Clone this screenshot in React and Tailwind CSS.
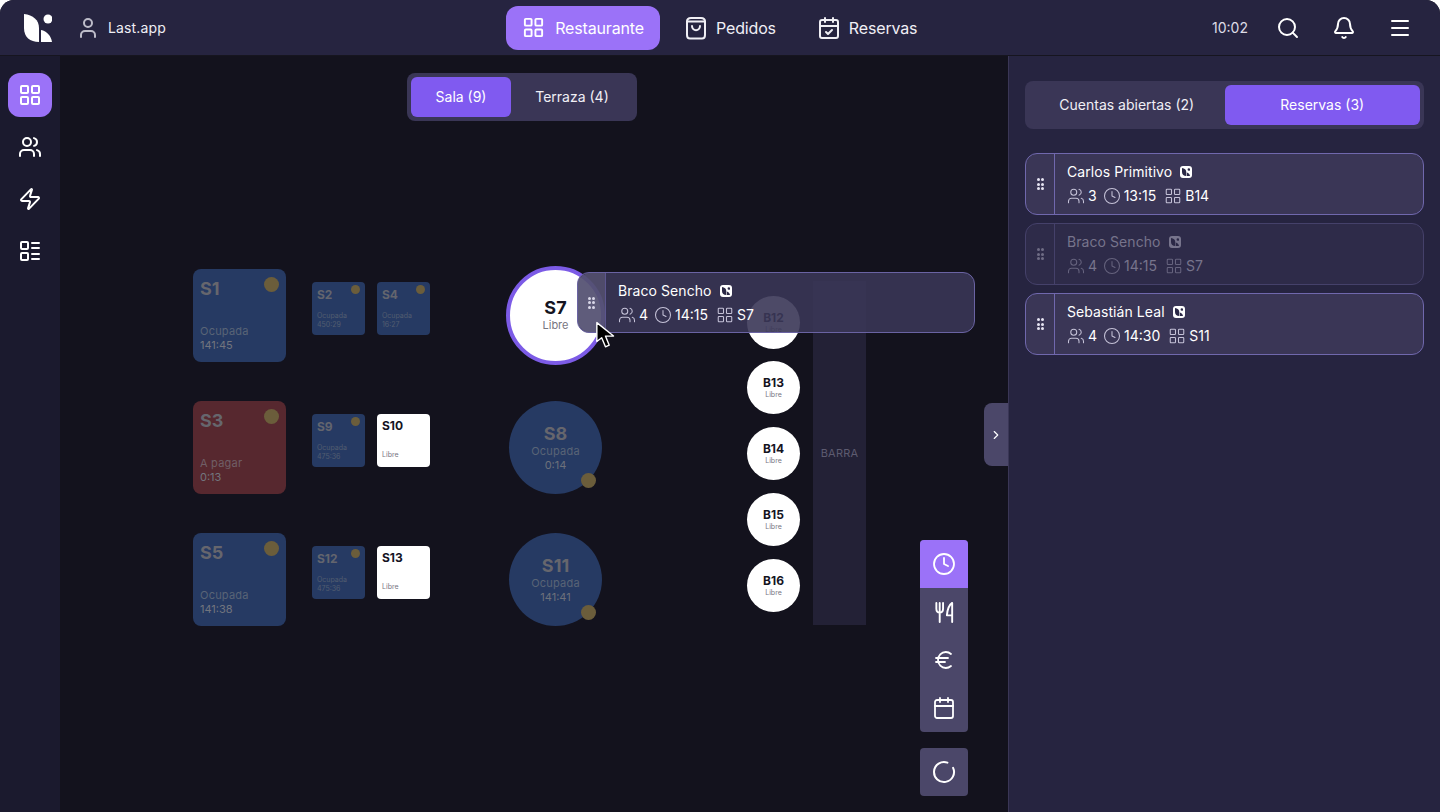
import { Bell, Calendar, CalendarCheck, ChevronRight, Clock, Euro, LayoutGrid, Menu, Search, User, Users, Zap } from 'lucide-react';

const font = { fontFamily: 'Inter, "Noto Sans", sans-serif' };

const Logo = ({ className }) => (
  <svg viewBox="0 0 28 28" className={className} fill="currentColor">
    <path d="M0 0 C9 1 15 6 15 14 V28 C6 28 0 23 0 14 Z" />
    <circle cx="24" cy="5" r="4.500" />
    <path d="M17 16 C23 17 27 22 28 28 H17 Z" />
  </svg>
);

const BagIcon = ({ className }) => (
  <svg viewBox="0 0 24 24" className={className} fill="none" stroke="currentColor" strokeWidth="2" strokeLinecap="round" strokeLinejoin="round">
    <path d="M3 5.500 C3 3 5 2 7 2 H17 C19 2 21 3 21 5.500 V19 C21 21 19.700 22.500 18 22.500 H6 C4.300 22.500 3 21 3 19 Z" />
    <path d="M3 5.500 H21" />
    <path d="M8 10 C8 15.500 16 15.500 16 10" />
  </svg>
);

const ListIcon = ({ className }) => (
  <svg viewBox="0 0 24 24" className={className} fill="none" stroke="currentColor" strokeWidth="2" strokeLinecap="round" strokeLinejoin="round">
    <rect x="3" y="3" width="7" height="7" rx="1" />
    <rect x="3" y="14" width="7" height="7" rx="1" />
    <path d="M14 4h7M14 9h7M14 15h7M14 20h7" />
  </svg>
);

const CutleryIcon = ({ className }) => (
  <svg viewBox="0 0 24 24" className={className} fill="none" stroke="currentColor" strokeWidth="2" strokeLinecap="round" strokeLinejoin="round">
    <path d="M3.500 2v6c0 2.500 1.500 4 3.500 4s3.500-1.500 3.500-4V2M7 2v20" />
    <path d="M20 22V2c-3 2-5 7-5.500 13H20" />
  </svg>
);

const SpinnerIcon = ({ className }) => (
  <svg viewBox="0 0 24 24" className={className} fill="none" stroke="currentColor" strokeWidth="2" strokeLinecap="round">
    <path d="M15.400 2.600 A10 10 0 1 0 21.100 7.800" />
  </svg>
);

const GripDots = ({ className }) => (
  <div className={`grid grid-cols-2 gap-x-[1px] gap-y-[1.5px] ${className}`}>
    {[0, 1, 2, 3, 4, 5].map((i) => (
      <span key={i} className="w-[3px] h-[3px] rounded-full bg-current" />
    ))}
  </div>
);

const SourceBadge = () => (
  <span className="w-3 h-3 rounded-[3px] bg-current inline-flex items-center justify-center">
    <Logo className="w-[8px] h-[8px] text-[#2b2846]" />
  </span>
);

const CardRow = ({ people, time, table, iconColor }) => (
  <div className="flex items-center text-sm leading-5">
    <Users className={`w-[18px] h-[18px] mr-[3px] ${iconColor}`} strokeWidth={1.4} />
    {people}
    <Clock className={`w-[18px] h-[18px] ml-[6px] mr-[3px] ${iconColor}`} strokeWidth={1.4} />
    {time}
    <LayoutGrid className={`w-[18px] h-[18px] ml-[8px] mr-[3px] ${iconColor}`} strokeWidth={1.4} />
    {table}
  </div>
);

const ReservationCard = ({ name, people, time, table, dim }) => (
  <div className={`flex h-[62px] rounded-xl border ${dim ? 'border-[#45416a] bg-[#2e2b49] text-[#77748c]' : 'border-[#7068ad] bg-[#3a3656] text-white'}`}>
    <div className={`w-[29px] flex items-center justify-center border-r ${dim ? 'border-[#45416a]' : 'border-[#7068ad]'}`}>
      <GripDots className={dim ? 'text-[#6f6c85]' : 'text-[#e6e4f2]'} />
    </div>
    <div className="pl-3 flex flex-col justify-center gap-[4px]">
      <div className="flex items-center gap-[8px] text-sm leading-5 tracking-[0.005em]">
        {name} <SourceBadge />
      </div>
      <CardRow people={people} time={time} table={table} iconColor={dim ? 'text-[#66637e]' : 'text-[#c5c2d8]'} />
    </div>
  </div>
);

const Dot = ({ className }) => (
  <span className={`absolute rounded-full bg-[#6b5d3b] ${className}`} />
);

// mesas cuadradas grandes
const BigTable = ({ name, status, time, pos, red }) => (
  <div className={`absolute w-[93px] h-[93px] rounded-[8px] pl-[7px] pt-[9px] pb-[10px] flex flex-col ${pos} ${red ? 'bg-[#57282f] text-[#705f66]' : 'bg-[#263a63] text-[#596476]'}`}>
    <div className="text-lg font-bold leading-[22px] text-[#66666d]">{name}</div>
    <div className="mt-auto text-[11px] leading-[13px] tracking-[0.02em]">{status}</div>
    <div className="text-[11px] leading-[14px] text-[#72757e]">{time}</div>
    <Dot className="top-[8px] right-[7px] w-[15px] h-[15px]" />
  </div>
);

const SmallTable = ({ name, status, time, pos }) => (
  <div className={`absolute w-[53px] h-[53px] rounded-[4px] pl-[5px] pt-[6px] pb-[6px] flex flex-col bg-[#263a63] text-[#525d70] ${pos}`}>
    <div className="text-xs font-bold leading-[14px] text-[#63656e]">{name}</div>
    <div className="mt-auto text-[7px] leading-[9px]">{status}</div>
    <div className="text-[7px] leading-[9px]">{time}</div>
    <Dot className="top-[3px] right-[5px] w-[9px] h-[9px]" />
  </div>
);

const FreeSmallTable = ({ name, pos }) => (
  <div className={`absolute w-[53px] h-[53px] rounded-[4px] pl-[5px] pt-[5px] pb-[8px] flex flex-col bg-white ${pos}`}>
    <div className="text-xs font-bold leading-[14px] text-[#15141f]">{name}</div>
    <div className="mt-auto text-[7px] leading-[9px] text-[#77757f]">Libre</div>
  </div>
);

const RoundTable = ({ name, time, pos }) => (
  <div className={`absolute w-[93px] h-[93px] rounded-full bg-[#263a63] flex flex-col items-center justify-center ${pos}`}>
    <div className="text-lg font-bold leading-[21px] text-[#66666d]">{name}</div>
    <div className="text-[11px] leading-[14px] tracking-[0.02em] text-[#596476]">Ocupada</div>
    <div className="text-[11px] leading-[15px] text-[#6d717b]">{time}</div>
    <Dot className="right-[6px] bottom-[6px] w-[15px] h-[15px]" />
  </div>
);

const Stool = ({ name, pos }) => (
  <div className={`absolute w-[53px] h-[53px] rounded-full bg-white flex flex-col items-center justify-center ${pos}`}>
    <div className="text-xs font-bold leading-[14px] text-[#15141f]">{name}</div>
    <div className="text-[7px] leading-[9px] text-[#77757f]">Libre</div>
  </div>
);

export default function App() {
  return (
    <div className="h-[812px] bg-white overflow-hidden opacity-[.999]" style={font}>
      <div className="h-full rounded-t-[14px] overflow-hidden flex flex-col bg-[#13121d] text-white">
        {/* barra superior */}
        <header className="h-[56px] shrink-0 flex items-center bg-[#262440] border-b border-[#16151f] relative">
          <div className="flex items-center w-[500px]">
            <Logo className="w-[28px] h-[28px] ml-[24px] text-white" />
            <User className="w-6 h-6 ml-[24px] text-[#bdbcc9]" strokeWidth={2} />
            <span className="ml-[8px] text-sm tracking-[0.01em] text-[#f0eff5]">Last.app</span>
          </div>
          <nav className="flex items-center ml-[6px] text-base tracking-[-0.01em]">
            <div className="w-[154px] h-[44px] rounded-xl bg-[#9b72f8] flex items-center justify-center gap-[10px]">
              <LayoutGrid className="w-[23px] h-[23px]" strokeWidth={2} />
              Restaurante
            </div>
            <div className="flex items-center gap-[8px] ml-[24px] text-[#f0eff5]">
              <BagIcon className="w-[24px] h-[24px]" />
              Pedidos
            </div>
            <div className="flex items-center gap-[8px] ml-[41px] text-[#f0eff5]">
              <CalendarCheck className="w-6 h-6" strokeWidth={2} />
              Reservas
            </div>
          </nav>
          <div className="ml-auto flex items-center pr-[28px]">
            <span className="text-sm text-[#dddce6] mr-[28px]">10:02</span>
            <Search className="w-6 h-6 mr-[32px]" strokeWidth={2} />
            <Bell className="w-6 h-6 mr-[32px]" strokeWidth={2} />
            <Menu className="w-6 h-6" strokeWidth={2} />
          </div>
        </header>

        <div className="flex-1 flex min-h-0">
          {/* barra lateral */}
          <aside className="w-[60px] shrink-0 bg-[#1b1a2e] flex flex-col items-center pt-[17px] gap-[8px]">
            <div className="w-[44px] h-[44px] rounded-xl bg-[#9b72f8] flex items-center justify-center">
              <LayoutGrid className="w-6 h-6" strokeWidth={2} />
            </div>
            <div className="w-[44px] h-[44px] flex items-center justify-center">
              <Users className="w-6 h-6" strokeWidth={2} />
            </div>
            <div className="w-[44px] h-[44px] flex items-center justify-center">
              <Zap className="w-6 h-6" strokeWidth={2} />
            </div>
            <div className="w-[44px] h-[44px] flex items-center justify-center">
              <ListIcon className="w-6 h-6" />
            </div>
          </aside>

          {/* plano de sala */}
          <main className="relative flex-1 min-w-0">
            <div className="flex justify-center pt-[17px] pr-[24px]">
              <div className="flex p-[4px] rounded-lg bg-[#3a3656] text-sm">
                <div className="w-[100px] h-[40px] rounded-md bg-[#805af0] flex items-center justify-center">Sala (9)</div>
                <div className="w-[122px] h-[40px] flex items-center justify-center text-[#f0eff5]">Terraza (4)</div>
              </div>
            </div>

            <BigTable pos="left-[133px] top-[213px]" name="S1" status="Ocupada" time="141:45" />
            <BigTable pos="left-[133px] top-[345px]" name="S3" status="A pagar" time="0:13" red />
            <BigTable pos="left-[133px] top-[477px]" name="S5" status="Ocupada" time="141:38" />

            <SmallTable pos="left-[252px] top-[226px]" name="S2" status="Ocupada" time="450:29" />
            <SmallTable pos="left-[317px] top-[226px]" name="S4" status="Ocupada" time="16:27" />
            <SmallTable pos="left-[252px] top-[358px]" name="S9" status="Ocupada" time="475:36" />
            <FreeSmallTable pos="left-[317px] top-[358px]" name="S10" />
            <SmallTable pos="left-[252px] top-[490px]" name="S12" status="Ocupada" time="475:36" />
            <FreeSmallTable pos="left-[317px] top-[490px]" name="S13" />

            <div className="absolute left-[446px] top-[210px] w-[99px] h-[99px] rounded-full bg-white border-[4px] border-[#7c5be6] flex flex-col items-center justify-center pb-[2px]">
              <div className="text-lg font-bold leading-[20px] text-[#15141f]">S7</div>
              <div className="text-[11px] leading-[14px] text-[#77757f]">Libre</div>
            </div>
            <RoundTable pos="left-[449px] top-[345px]" name="S8" time="0:14" />
            <RoundTable pos="left-[449px] top-[477px]" name="S11" time="141:41" />

            <div className="absolute left-[753px] top-[225px] w-[53px] h-[344px] bg-[#232136] flex items-center justify-center text-[11px] tracking-[0.02em] text-[#5d5b70]">
              BARRA
            </div>
            <Stool pos="left-[687px] top-[240px]" name="B12" />
            <Stool pos="left-[687px] top-[305px]" name="B13" />
            <Stool pos="left-[687px] top-[371px]" name="B14" />
            <Stool pos="left-[687px] top-[437px]" name="B15" />
            <Stool pos="left-[687px] top-[503px]" name="B16" />

            {/* tarjeta arrastrada */}
            <div className="absolute left-[517px] top-[216px] w-[398px] h-[61px] flex rounded-xl border border-[#6a63a3] bg-[#3a3656]/90 text-white">
              <div className="w-[28px] flex items-center justify-center border-r border-[#5c568f] bg-[#8b89a8]/30 rounded-l-xl">
                <GripDots className="text-[#d9d7e8]" />
              </div>
              <div className="pl-3 flex flex-col justify-center gap-[4px]">
                <div className="flex items-center gap-[8px] text-sm leading-5 tracking-[0.005em]">
                  Braco Sencho <SourceBadge />
                </div>
                <CardRow people="4" time="14:15" table="S7" iconColor="text-[#c5c2d8]" />
              </div>
            </div>

            {/* cursor */}
            <svg viewBox="0 0 20 26" className="absolute left-[535px] top-[265px] w-[22px] h-[28px]">
              <path d="M1.500 1.500 L1.500 19 L6 15.500 L9.500 24 L13 22.500 L9.500 14 L17 14 Z" fill="#000" stroke="#fff" strokeWidth="1.300" strokeLinejoin="round" />
            </svg>

            <div className="absolute right-0 top-[347px] w-[24px] h-[63px] rounded-l-lg bg-[#4b4769] flex items-center justify-center">
              <ChevronRight className="w-[14px] h-[14px]" strokeWidth={2} />
            </div>

            <div className="absolute left-[860px] top-[484px] w-[48px] flex flex-col rounded-[4px] overflow-hidden bg-[#4b4769]">
              <div className="h-[48px] bg-[#9b72f8] flex items-center justify-center">
                <Clock className="w-6 h-6" strokeWidth={1.8} />
              </div>
              <div className="h-[48px] flex items-center justify-center">
                <CutleryIcon className="w-[23px] h-[23px]" />
              </div>
              <div className="h-[48px] flex items-center justify-center">
                <Euro className="w-6 h-6" strokeWidth={1.8} />
              </div>
              <div className="h-[48px] flex items-center justify-center">
                <Calendar className="w-6 h-6" strokeWidth={1.8} />
              </div>
            </div>
            <div className="absolute left-[860px] top-[692px] w-[48px] h-[48px] rounded-[4px] bg-[#4b4769] flex items-center justify-center">
              <SpinnerIcon className="w-6 h-6" />
            </div>
          </main>

          {/* panel derecho */}
          <aside className="w-[432px] shrink-0 bg-[#262440] border-l border-[#3a3656] pl-[16px] pr-[16px] pt-[25px]">
            <div className="flex justify-between p-[4px] rounded-lg bg-[#3a3656] text-sm">
              <div className="w-[196px] h-[40px] flex items-center justify-center text-[#f0eff5]">Cuentas abiertas (2)</div>
              <div className="w-[196px] h-[40px] rounded-md bg-[#805af0] flex items-center justify-center">Reservas (3)</div>
            </div>
            <div className="mt-[24px] flex flex-col gap-[8px]">
              <ReservationCard name="Carlos Primitivo" people="3" time="13:15" table="B14" />
              <ReservationCard name="Braco Sencho" people="4" time="14:15" table="S7" dim />
              <ReservationCard name="Sebastián Leal" people="4" time="14:30" table="S11" />
            </div>
          </aside>
        </div>
      </div>
    </div>
  );
}
